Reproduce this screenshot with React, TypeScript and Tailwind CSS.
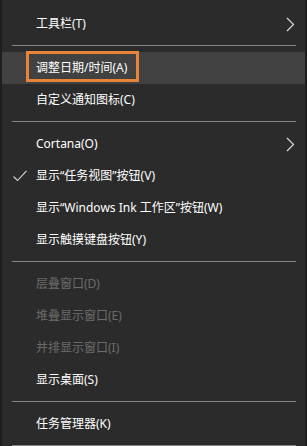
const FONT = "font-['Noto_Sans','Noto_Sans_CJK_SC',sans-serif]";

type Item =
  | { kind: "sep" }
  | {
      kind: "item";
      label: string;
      disabled?: boolean;
      checked?: boolean;
      submenu?: boolean;
      hover?: boolean;
      marked?: boolean;
    };

const ITEMS: Item[] = [
  { kind: "item", label: "工具栏(T)", submenu: true },
  { kind: "sep" },
  { kind: "item", label: "调整日期/时间(A)", hover: true, marked: true },
  { kind: "item", label: "自定义通知图标(C)" },
  { kind: "sep" },
  { kind: "item", label: "Cortana(O)", submenu: true },
  { kind: "item", label: "显示“任务视图”按钮(V)", checked: true },
  { kind: "item", label: "显示“Windows Ink 工作区”按钮(W)" },
  { kind: "item", label: "显示触摸键盘按钮(Y)" },
  { kind: "sep" },
  { kind: "item", label: "层叠窗口(D)", disabled: true },
  { kind: "item", label: "堆叠显示窗口(E)", disabled: true },
  { kind: "item", label: "并排显示窗口(I)", disabled: true },
  { kind: "item", label: "显示桌面(S)" },
  { kind: "sep" },
  { kind: "item", label: "任务管理器(K)" },
  { kind: "sep" },
];

function Chevron() {
  return (
    <svg width="9" height="15" viewBox="0 0 9 15" fill="none">
      <path d="M1 1 L7.5 7.5 L1 14" stroke="#d8d8d8" strokeWidth="1.2" />
    </svg>
  );
}

function Check() {
  return (
    <svg width="14" height="12" viewBox="0 0 14 12" fill="none">
      <path d="M0.5 6.5 L4.5 10.5 L13.5 0.8" stroke="#d8d8d8" strokeWidth="1.1" />
    </svg>
  );
}

function Separator() {
  return (
    <div className="pt-[5px] pb-[6px] pl-[10px] pr-[9px]">
      <div className="h-px bg-[#858585]" />
    </div>
  );
}

function MenuRow({ item }: { item: Extract<Item, { kind: "item" }> }) {
  return (
    <div
      className={`relative flex items-center h-[32px] ${
        item.hover ? "bg-[#414141]" : ""
      }`}
    >
      <div className="w-[34px] flex justify-center pl-[1px]">
        {item.checked && <Check />}
      </div>
      <span
        className={`flex-1 text-[12px] leading-none whitespace-nowrap ${
          item.disabled ? "text-[#6b6b6b]" : "text-white"
        }`}
      >
        {item.label}
      </span>
      {item.submenu && (
        <div className="w-[19px] flex items-center">
          <Chevron />
        </div>
      )}
      {item.marked && (
        <div className="absolute left-[24px] top-[-1px] w-[113px] h-[31px] border-[3px] border-[#e8843a]" />
      )}
    </div>
  );
}

export default function App() {
  return (
    <div className={`w-[307px] h-[446px] overflow-hidden bg-[#1e1e1e] px-[2px] ${FONT}`}>
      <div className="h-full bg-[#2b2b2b] pt-[8px]">
        {ITEMS.map((item, i) =>
          item.kind === "sep" ? (
            <Separator key={i} />
          ) : (
            <MenuRow key={i} item={item} />
          )
        )}
      </div>
    </div>
  );
}
